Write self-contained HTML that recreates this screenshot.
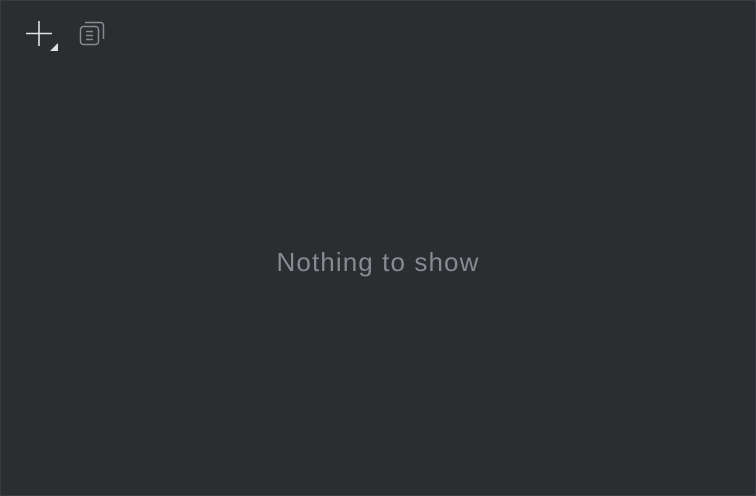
<!DOCTYPE html>
<html><head><style>
html,body{margin:0;padding:0;}
body{width:756px;height:496px;background:#2b2d30;position:relative;overflow:hidden;font-family:"Liberation Sans",sans-serif;}
.frame{position:absolute;left:0;top:0;width:754px;height:494px;border:1px solid #393b40;}
.msg{position:absolute;left:0;width:756px;top:247px;text-align:center;color:#868a91;font-size:26px;letter-spacing:1.1px;line-height:30px;}
</style></head><body>
<div class="frame"></div>
<svg style="position:absolute;left:0;top:0" width="120" height="60">
<path d="M39 21V46M26 33.5H52" stroke="#dfe1e5" stroke-width="1.6"/>
<path d="M58 51H50L58 43Z" fill="#dfe1e5"/>
<rect x="80.5" y="26.5" width="18" height="18" rx="3" fill="none" stroke="#868a91" stroke-width="1.5"/>
<path d="M85 22.5H100.5A3 3 0 0 1 103.5 25.5V39" fill="none" stroke="#868a91" stroke-width="1.5"/>
<path d="M86 31.5H93M86 35.5H93M86 39.5H93" stroke="#868a91" stroke-width="1.4"/>
</svg>
<div class="msg">Nothing to show</div>
</body></html>
